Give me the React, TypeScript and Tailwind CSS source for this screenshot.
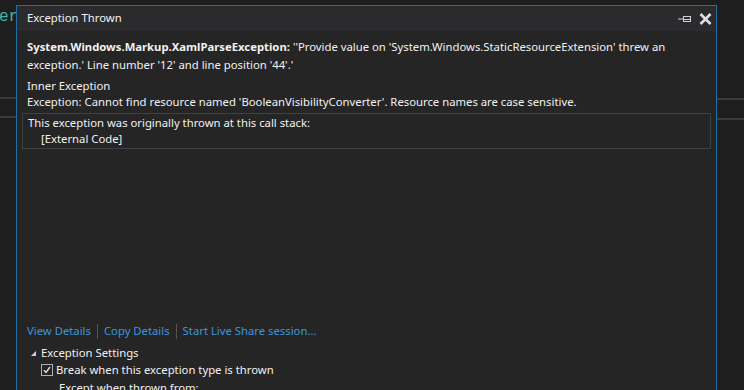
import React from "react";

export default function App() {
  const font = { fontFamily: '"Noto Sans", "Open Sans", sans-serif' };
  return (
    <div className="relative w-[744px] h-[390px] overflow-hidden bg-[#1e1e1e] text-[11.3px] text-[#f1f1f1]" style={font}>
      {/* background editor fragments */}
      <div className="absolute left-[-1px] top-[6px] text-[16px] leading-[22px] text-[#3fb8a2]" style={{ fontFamily: '"Liberation Mono", monospace' }}>
        ero
      </div>
      <div className="absolute left-0 top-[97px] w-[20px] h-[2px] bg-[#3a3a3a]" />
      <div className="absolute left-0 top-[116px] w-[20px] h-[2px] bg-[#3a3a3a]" />
      <div className="absolute right-0 top-[98px] w-[30px] h-[2px] bg-[#3a3a3a]" />
      <div className="absolute right-0 top-[118px] w-[30px] h-[2px] bg-[#3a3a3a]" />

      {/* dialog */}
      <div className="absolute left-[16px] top-[5px] w-[701px] h-[400px] border border-[#1f6fa8] bg-[#252526] flex flex-col">
        <div className="h-[25px] bg-[#2b2b2d] flex items-center pl-[10px] pr-[4px]">
          <span className="flex-1 text-[#f1f1f1]">Exception Thrown</span>
          <svg width="14" height="10" viewBox="0 0 14 10" className="mr-[7px]">
            <path d="M0 5H5" stroke="#d0d0d0" strokeWidth="1" />
            <rect x="5.5" y="2.5" width="7" height="5" fill="none" stroke="#d0d0d0" strokeWidth="1" />
            <path d="M5.5 5.5H12.5" stroke="#d0d0d0" strokeWidth="1" />
          </svg>
          <svg width="13" height="12" viewBox="0 0 13 12">
            <path d="M1.5 1L11.5 11M11.5 1L1.5 11" stroke="#e0e0e0" strokeWidth="2.6" />
          </svg>
        </div>
        <div className="flex-1 flex flex-col px-[5px] pt-[7px]">
          <div className="px-[5px] leading-[18px]">
            <span className="font-bold">System.Windows.Markup.XamlParseException:</span>{" "}
            ''Provide value on 'System.Windows.StaticResourceExtension' threw an
            <br />
            exception.' Line number '12' and line position '44'.'
          </div>
          <div className="px-[5px] mt-[4px] leading-[16px]">
            <div>Inner Exception</div>
            <div>Exception: Cannot find resource named 'BooleanVisibilityConverter'. Resource names are case sensitive.</div>
          </div>
          <div className="mt-[3px] border border-[#3f3f46] px-[5px] pt-[1px] pb-[1px] leading-[16px]">
            <div>This exception was originally thrown at this call stack:</div>
            <div className="pl-[13px]">[External Code]</div>
          </div>
          <div className="mt-[174px] px-[5px] flex items-center text-[#3a96dd] leading-[16px]">
            <span>View Details</span>
            <span className="mx-[6px] w-px h-[15px] bg-[#555]" />
            <span>Copy Details</span>
            <span className="mx-[6px] w-px h-[15px] bg-[#555]" />
            <span>Start Live Share session...</span>
          </div>
          <div className="mt-[6px] pl-[8px] flex items-center leading-[16px]">
            <svg width="7" height="7" viewBox="0 0 7 7" className="mr-[4px]">
              <path d="M6 1V6H1Z" fill="#d0d0d0" />
            </svg>
            <span>Exception Settings</span>
          </div>
          <div className="mt-[1px] pl-[19px] flex items-center leading-[16px]">
            <span className="w-[12px] h-[12px] border border-[#b0b0b0] flex items-center justify-center mr-[3px]">
              <svg width="10" height="10" viewBox="0 0 10 10">
                <path d="M2 5.2L4 7.5L8 2" stroke="#e0e0e0" strokeWidth="1.4" fill="none" />
              </svg>
            </span>
            <span>Break when this exception type is thrown</span>
          </div>
          <div className="pl-[37px] leading-[16px] mt-[2px]">Except when thrown from:</div>
        </div>
      </div>
    </div>
  );
}
